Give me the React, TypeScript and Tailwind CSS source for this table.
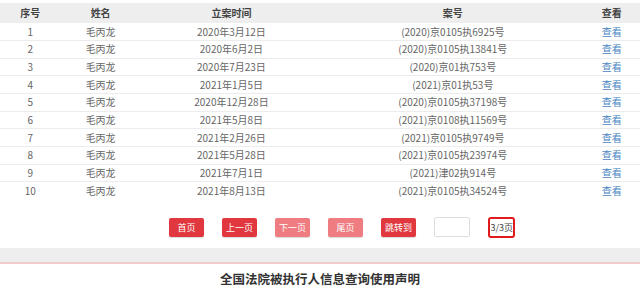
import React from 'react';

const rows = [
  { id: 1, name: '毛丙龙', date: '2020年3月12日', caseNo: '(2020)京0105执6925号' },
  { id: 2, name: '毛丙龙', date: '2020年6月2日', caseNo: '(2020)京0105执13841号' },
  { id: 3, name: '毛丙龙', date: '2020年7月23日', caseNo: '(2020)京01执753号' },
  { id: 4, name: '毛丙龙', date: '2021年1月5日', caseNo: '(2021)京01执53号' },
  { id: 5, name: '毛丙龙', date: '2020年12月28日', caseNo: '(2020)京0105执37198号' },
  { id: 6, name: '毛丙龙', date: '2021年5月8日', caseNo: '(2021)京0108执11569号' },
  { id: 7, name: '毛丙龙', date: '2021年2月26日', caseNo: '(2021)京0105执9749号' },
  { id: 8, name: '毛丙龙', date: '2021年5月28日', caseNo: '(2021)京0105执23974号' },
  { id: 9, name: '毛丙龙', date: '2021年7月1日', caseNo: '(2021)津02执914号' },
  { id: 10, name: '毛丙龙', date: '2021年8月13日', caseNo: '(2021)京0105执34524号' },
];

const pager = [
  { label: '首页', disabled: false },
  { label: '上一页', disabled: false },
  { label: '下一页', disabled: true },
  { label: '尾页', disabled: true },
  { label: '跳转到', disabled: false },
];

const App: React.FC = () => {
  return (
    <div className="w-[640px] h-[288px] overflow-hidden bg-white font-['Microsoft_YaHei','Noto_Sans_CJK_SC',sans-serif] text-[10px] text-[#666]">
      {/* Result table */}
      <table className="w-full mt-[3px] border-collapse table-fixed">
        <colgroup>
          <col className="w-[60px]" />
          <col className="w-[80px]" />
          <col className="w-[180px]" />
          <col className="w-[260px]" />
          <col className="w-[56px]" />
        </colgroup>
        <thead>
          <tr className="h-[20px] bg-[#eeeeee]">
            <th className="font-semibold text-[#444] leading-none">序号</th>
            <th className="font-semibold text-[#444] leading-none">姓名</th>
            <th className="font-semibold text-[#444] leading-none">立案时间</th>
            <th className="font-semibold text-[#444] leading-none">案号</th>
            <th className="font-semibold text-[#444] leading-none">查看</th>
          </tr>
        </thead>
        <tbody>
          {rows.map(row => (
            <tr key={row.id} className="h-[17.67px] border-b border-[#ececec] last:border-b-0">
              <td className="text-center leading-none">{row.id}</td>
              <td className="text-center leading-none">{row.name}</td>
              <td className="text-center leading-none">{row.date}</td>
              <td className="text-center leading-none">{row.caseNo}</td>
              <td className="text-center leading-none text-[#4a86c2]">查看</td>
            </tr>
          ))}
        </tbody>
      </table>

      {/* Pagination */}
      <div className="flex items-center gap-[18px] mt-[17px] ml-[169px] h-[21px]">
        {pager.map(btn => (
          <button
            key={btn.label}
            className={`w-[35px] h-[19px] rounded-[2px] text-white text-[9px] leading-none shadow-[0_1px_1px_rgba(0,0,0,0.15)] ${
              btn.disabled ? 'bg-[#ee7c80]' : 'bg-[#e0383e]'
            }`}
          >
            {btn.label}
          </button>
        ))}
        <input className="w-[36px] h-[20px] border border-[#dddddd] rounded-[2px] bg-white" />
        <div className="w-[27px] h-[21px] border-2 border-[#e01b1b] rounded-[3px] overflow-hidden flex items-center justify-end text-[9px] text-[#444] leading-none whitespace-nowrap">
          3/3页
        </div>
      </div>

      {/* Footer band */}
      <div className="mt-[10px] h-[14px] bg-[#eeeeee]" />
      <div className="h-[2px] bg-[#efcdcd]" />
      <h2 className="mt-[9px] text-center text-[12.5px] font-bold text-[#333] leading-none">
        全国法院被执行人信息查询使用声明
      </h2>
    </div>
  );
};

export default App;
